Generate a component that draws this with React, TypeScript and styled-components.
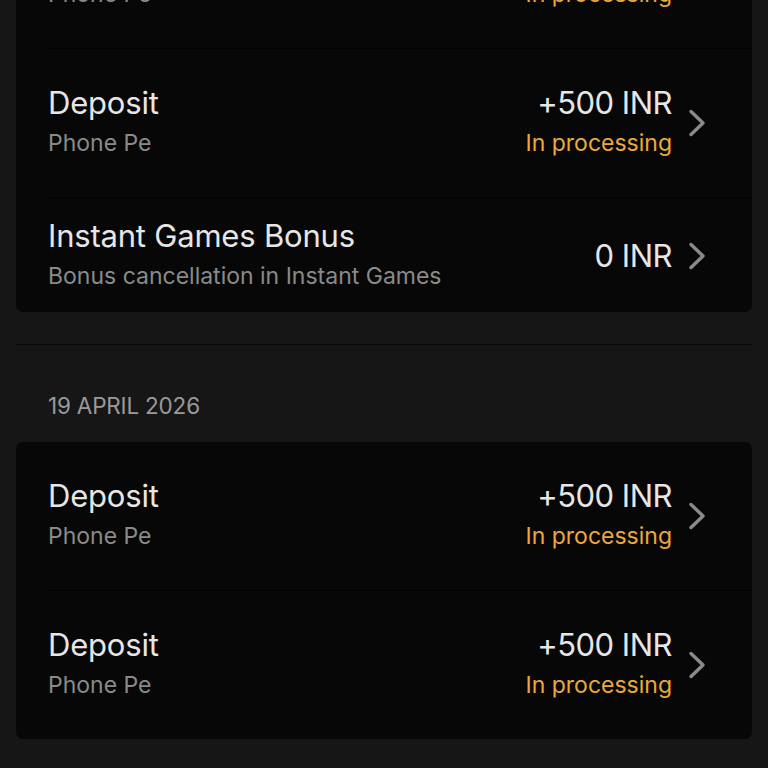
import React from "react";
import styled, { createGlobalStyle } from "styled-components";

type Tx = {
  id: string;
  title: string;
  subtitle: string;
  amount: string;
  status?: string;
};

type Day = {
  date?: string;
  items: Tx[];
};

const days: Day[] = [
  {
    items: [
      { id: "a1", title: "Deposit", subtitle: "Phone Pe", amount: "+500 INR", status: "In processing" },
      { id: "a2", title: "Deposit", subtitle: "Phone Pe", amount: "+500 INR", status: "In processing" },
      { id: "a3", title: "Instant Games Bonus", subtitle: "Bonus cancellation in Instant Games", amount: "0 INR" },
    ],
  },
  {
    date: "19 April 2026",
    items: [
      { id: "b1", title: "Deposit", subtitle: "Phone Pe", amount: "+500 INR", status: "In processing" },
      { id: "b2", title: "Deposit", subtitle: "Phone Pe", amount: "+500 INR", status: "In processing" },
    ],
  },
];

const GlobalStyle = createGlobalStyle`
  html, body {
    margin: 0;
    padding: 0;
    background: #161616;
    overflow: hidden;
  }
  body {
    font-family: Inter, "Noto Sans", sans-serif;
    -webkit-font-smoothing: antialiased;
  }
`;

const Page = styled.div`
  min-height: 768px;
  padding: 0 16px;
  box-sizing: border-box;
`;

/* the list is scrolled: first row is partly above the viewport */
const Scroller = styled.div`
  margin-top: -100px;
`;

const Section = styled.section<{ $first?: boolean }>`
  ${(p) =>
    p.$first
      ? ""
      : `
    margin-top: 32px;
    border-top: 1px solid #0a0a0a;
    padding-top: 46px;
  `}
`;

const DateLabel = styled.div`
  padding-left: 32px;
  margin-bottom: 21px;
  font-size: 22.5px;
  line-height: 30px;
  color: #9a9a9a;
  text-transform: uppercase;
  letter-spacing: -0.2px;
`;

const Card = styled.div`
  background: #070707;
  border-radius: 7px;
  overflow: hidden;
`;

const Row = styled.div<{ $compact?: boolean }>`
  display: flex;
  align-items: center;
  justify-content: space-between;
  margin-left: 32px;
  padding: ${(p) => (p.$compact ? "18px 0 16px" : "34px 0 34px")};
  padding-right: 46px;
  border-top: 1px solid #000;

  &:first-child {
    border-top: none;
  }
`;

const Info = styled.div`
  display: flex;
  flex-direction: column;
`;

const Title = styled.div`
  font-size: 31px;
  line-height: 40px;
  color: #e6e6e6;
  letter-spacing: -0.2px;
`;

const Subtitle = styled.div`
  font-size: 23px;
  line-height: 40px;
  color: #8a8a8a;
`;

const Side = styled.div`
  display: flex;
  align-items: center;
  gap: 16px;
`;

const Amounts = styled.div`
  display: flex;
  flex-direction: column;
  align-items: flex-end;
`;

const Amount = styled.div`
  font-size: 31px;
  line-height: 40px;
  color: #e6e6e6;
  letter-spacing: -0.5px;
`;

const Status = styled.div`
  font-size: 23px;
  line-height: 40px;
  color: #eaa93c;
`;

const Chevron = styled.svg`
  width: 18px;
  height: 28px;
  flex-shrink: 0;
`;

function TxRow({ tx }: { tx: Tx }) {
  return (
    <Row $compact={!tx.status}>
      <Info>
        <Title>{tx.title}</Title>
        <Subtitle>{tx.subtitle}</Subtitle>
      </Info>
      <Side>
        <Amounts>
          <Amount>{tx.amount}</Amount>
          {tx.status && <Status>{tx.status}</Status>}
        </Amounts>
        <Chevron viewBox="0 0 18 28" fill="none">
          <path d="M3 2.5L15 14L3 25.5" stroke="#8a8a8a" strokeWidth="3.4" strokeLinecap="round" strokeLinejoin="round" />
        </Chevron>
      </Side>
    </Row>
  );
}

export default function App() {
  return (
    <>
      <GlobalStyle />
      <Page>
        <Scroller>
          {days.map((day, i) => (
            <Section key={i} $first={i === 0}>
              {day.date && <DateLabel>{day.date}</DateLabel>}
              <Card>
                {day.items.map((tx) => (
                  <TxRow key={tx.id} tx={tx} />
                ))}
              </Card>
            </Section>
          ))}
        </Scroller>
      </Page>
    </>
  );
}
